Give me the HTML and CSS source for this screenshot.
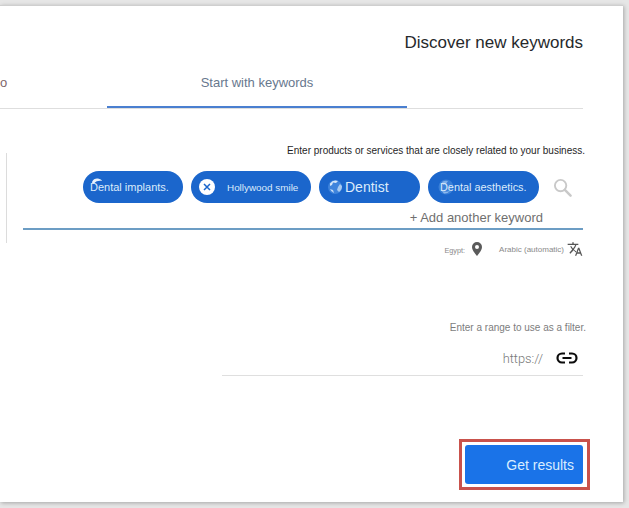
FILE: index.html
```html
<!DOCTYPE html>
<html lang="en">
<head>
<meta charset="utf-8">
<title>Discover new keywords</title>
<link rel="stylesheet" href="styles.css">
</head>
<body>
<main class="card">
  <h1 class="title">Discover new keywords</h1>
  <div class="tabs">
    <div class="tab tab-first">o</div>
    <div class="tab tab-active">Start with keywords</div>
    <div class="tab tab-rest"></div>
  </div>
  <div class="content">
    <div class="side-rule"></div>
    <div class="form">
      <p class="hint">Enter products or services that are closely related to your business.</p>
      <div class="chips">
        <div class="chip chip-1">
          <svg class="chip-mark tooth" viewBox="0 0 12 6"><path d="M1 4C2 1 5 0 7 .5S11 2 11 3C8 2.600 5 3 3 5.500 2 5.500 1 5 1 4Z" fill="#e8f1fb"/></svg>
          <span>Dental implants.</span>
        </div>
        <div class="chip chip-2">
          <svg class="close" viewBox="0 0 16 16"><circle cx="8" cy="8" r="8" fill="#fff"/><path d="M5 5l6 6M11 5l-6 6" stroke="#1b66cc" stroke-width="1.500"/></svg>
          <span>Hollywood smile</span>
        </div>
        <div class="chip chip-3">
          <svg class="globe" viewBox="0 0 16 16"><circle cx="8" cy="8" r="7" fill="#3f84dc"/><path d="M3 4.500a7 7 0 0 1 8-2.500L9 4 6 3.500 5 6 3 7Z" fill="#d5e6f8"/><path d="M15 7a7 7 0 0 1-3 6L10 11l1-3 2-3Z" fill="#a9cbf1"/><path d="M3 10l3 1 1 3a7 7 0 0 1-4-4Z" fill="#c7ddf6"/></svg>
          <span>Dentist</span>
        </div>
        <div class="chip chip-4">
          <svg class="swirl" viewBox="0 0 16 16"><circle cx="8" cy="8" r="7.500" fill="#3a80d8"/><path d="M4 3a7 7 0 0 1 6-1L8 5 5 6Z" fill="#7fb0ea"/><path d="M3 11q4 3 9 1-3 3-6 2.500Z" fill="#8cb8ec"/></svg>
          <span>Dental aesthetics.</span>
        </div>
        <svg class="search" viewBox="0 0 20 20"><circle cx="8" cy="8" r="6" fill="none" stroke="#c9c9c9" stroke-width="2"/><path d="M12.500 12.500L18.500 18.500" stroke="#c9c9c9" stroke-width="2.600" stroke-linecap="round"/></svg>
      </div>
      <div class="add">+ Add another keyword</div>
      <div class="meta">
        <span class="egypt">Egypt:</span>
        <svg class="pin" viewBox="0 0 12 14"><path fill-rule="evenodd" d="M6 0a5 5 0 0 1 5 5c0 3.500-5 9-5 9S1 8.500 1 5a5 5 0 0 1 5-5Zm0 3a2 2 0 1 0 0 4 2 2 0 0 0 0-4Z" fill="#5b5b5b"/></svg>
        <span class="lang">Arabic (automatic)</span>
        <svg class="translate" viewBox="0 0 24 24"><path d="M12.900 15.100l-2.600-2.500c1.800-2 3-4.200 3.800-6.600H17V4h-7V2H8v2H1v2h11.200c-.7 1.900-1.700 3.800-3.200 5.400-.9-1-1.700-2.100-2.300-3.400h-2c.7 1.600 1.700 3.200 3 4.600L3.600 17.500 5 19l5-5 3.100 3.100.8-2ZM18.500 10h-2L12 22h2l1.100-3h4.800l1.100 3h2l-4.500-12Zm-2.600 7 1.600-4.300 1.600 4.300h-3.200Z" fill="#555"/></svg>
      </div>
      <p class="range-hint">Enter a range to use as a filter.</p>
      <div class="url">
        <span class="url-text">https://</span>
        <svg class="link" viewBox="0 0 22 12"><path d="M9 1.500H6a4.500 4.500 0 0 0 0 9h3M13 1.500h3a4.500 4.500 0 0 1 0 9h-3M6.500 6h9" fill="none" stroke="#0c0c0c" stroke-width="2.200"/></svg>
      </div>
      <div class="actions">
        <div class="highlight"><button class="submit" type="button">Get results</button></div>
      </div>
    </div>
  </div>
</main>
</body>
</html>
```

FILE: styles.css
```css
* {
  box-sizing: border-box;
}

html,
body {
  height: 100%;
}

body {
  margin: 0;
  background: #e6e6e6;
  font-family: "Liberation Sans", Arial, sans-serif;
  overflow: hidden;
}

.card {
  width: 623px;
  height: 497px;
  margin-top: 5px;
  padding-right: 40px;
  background: #fff;
  border-top: 1px solid #cfcfcf;
  box-shadow: 1px 1px 4px rgba(0, 0, 0, 0.28);
}

.title {
  margin: 0;
  padding-top: 27px;
  height: 62px;
  text-align: right;
  font-size: 17px;
  line-height: 20px;
  font-weight: 400;
  color: #26292c;
}

.tabs {
  display: flex;
  height: 41px;
  border-bottom: 1px solid #dedede;
}

.tab {
  font-size: 13px;
  line-height: 30px;
}

.tab-first {
  width: 107px;
  color: #80666a;
}

.tab-active {
  width: 300px;
  height: 40px;
  text-align: center;
  color: #68788e;
  border-bottom: 2px solid #4a7fd0;
}

.tab-rest {
  flex: 1;
}

.content {
  display: flex;
  padding-top: 36px;
}

.side-rule {
  width: 1px;
  height: 90px;
  margin: 8px 16px 0 6px;
  background: #dcdcdc;
}

.form {
  flex: 1;
}

.hint {
  margin: 0 -2px 0 0;
  height: 12px;
  text-align: right;
  font-size: 10px;
  line-height: 12px;
  color: #1f1f1f;
}

.chips {
  display: flex;
  align-items: center;
  height: 32px;
  margin-top: 14px;
  padding-left: 60px;
}

.chip {
  position: relative;
  display: flex;
  align-items: center;
  height: 32px;
  margin-right: 8px;
  border-radius: 16px;
  background: #1b66cc;
  color: #dcebfb;
  white-space: nowrap;
}

.chip-1 {
  width: 100px;
  padding-left: 7px;
  font-size: 11px;
}

.chip-2 {
  width: 120px;
  padding-left: 8px;
  font-size: 9.900px;
}

.chip-3 {
  width: 101px;
  padding-left: 26px;
  font-size: 14px;
}

.chip-4 {
  width: 111px;
  margin-right: 14px;
  padding-left: 12px;
  font-size: 10.900px;
}

.chip-mark {
  position: absolute;
  left: 8px;
  top: 7px;
  width: 12px;
  height: 6px;
}

.close {
  width: 16px;
  height: 16px;
  margin-right: 12px;
  flex: none;
}

.globe {
  position: absolute;
  left: 8px;
  top: 8px;
  width: 16px;
  height: 16px;
}

.swirl {
  position: absolute;
  left: 10px;
  top: 8px;
  width: 16px;
  height: 16px;
}

.chip span {
  position: relative;
}

.search {
  width: 19px;
  height: 19px;
  flex: none;
}

.add {
  height: 27px;
  padding: 7px 40px 0 0;
  border-bottom: 2px solid #6c9dc4;
  text-align: right;
  font-size: 13px;
  line-height: 16px;
  color: #6f6f6f;
}

.meta {
  display: flex;
  align-items: center;
  justify-content: flex-end;
  height: 20px;
  margin-top: 9px;
}

.egypt {
  font-size: 7.300px;
  color: #8a8a8a;
  margin-top: 2px;
}

.pin {
  width: 12px;
  height: 14px;
  margin: 0 16px 0 6px;
}

.lang {
  font-size: 8px;
  color: #8a8a8a;
}

.translate {
  width: 16px;
  height: 16px;
  margin-left: 3px;
}

.range-hint {
  margin: 63px -3px 0 0;
  height: 12px;
  text-align: right;
  font-size: 10px;
  line-height: 12px;
  color: #7d7d7d;
}

.url {
  display: flex;
  align-items: center;
  justify-content: flex-end;
  height: 35px;
  margin: 7px 0 0 199px;
  padding: 0 5px 0 0;
  border-bottom: 1px solid #dfdfdf;
}

.url-text {
  font-family: Roboto, "Liberation Sans", sans-serif;
  font-size: 12.800px;
  font-weight: 300;
  color: #777;
  margin-right: 13px;
}

.link {
  width: 22px;
  height: 12px;
}

.actions {
  display: flex;
  justify-content: flex-end;
  margin: 63px -7px 0 0;
}

.highlight {
  padding: 3px 4px 3px 3px;
  border: 3px solid #c9524c;
  background: #fff;
}

.submit {
  display: block;
  width: 118px;
  height: 39px;
  padding: 0 9px 0 0;
  border: 0;
  border-radius: 3px;
  background: #1a73e8;
  color: #d9edff;
  font-family: "Liberation Sans", Arial, sans-serif;
  font-size: 14px;
  text-align: right;
}
```
